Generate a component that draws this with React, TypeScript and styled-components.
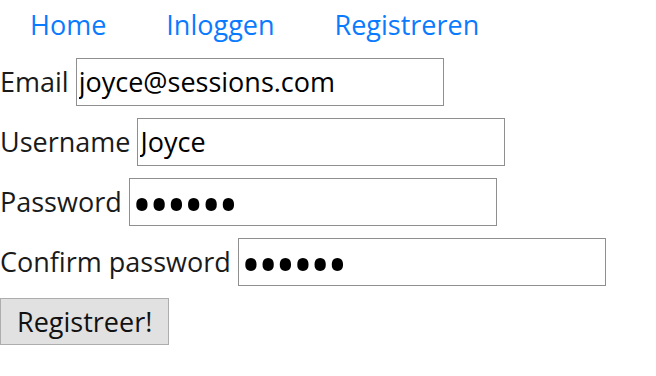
import React from "react";
import styled, { createGlobalStyle } from "styled-components";

const GlobalStyle = createGlobalStyle`
  body {
    margin: 0;
    background: #fff;
    font-family: "Open Sans", "Noto Sans", sans-serif;
    color: #111;
  }
`;

const Nav = styled.nav`
  height: 58px;
  ul {
    list-style: none;
    margin: 0;
    padding: 0 0 0 30px;
    display: flex;
    gap: 60px;
    height: 48px;
    align-items: center;
  }
  a {
    color: #0a7bff;
    text-decoration: none;
    font-size: 27px;
  }
`;

const Form = styled.form`
  display: flex;
  flex-direction: column;
  gap: 13px;
`;

const Row = styled.div`
  display: flex;
  align-items: center;
  gap: 7px;
  height: 47px;
  label {
    font-size: 27px;
    color: #1a1a1a;
  }
`;

const Input = styled.input`
  box-sizing: border-box;
  width: 368px;
  height: 48px;
  border: 1px solid #8f8f8f;
  padding: 0 2px;
  font-family: "Open Sans", "Noto Sans", sans-serif;
  font-size: 27px;
  color: #000;
  outline: none;
  &[type="password"] {
    font-size: 54px;
    letter-spacing: -3px;
    padding: 4px 2px 0;
  }
`;

const Button = styled.button`
  align-self: flex-start;
  box-sizing: border-box;
  height: 47px;
  padding: 0 16px;
  background: #e1e1e1;
  border: 1px solid #adadad;
  border-radius: 0;
  font-family: "Open Sans", "Noto Sans", sans-serif;
  font-size: 27px;
  color: #111;
`;

const App = () => {
  return (
    <>
      <GlobalStyle />
      <Nav>
        <ul>
          <li>
            <a href="#">Home</a>
          </li>
          <li>
            <a href="#">Inloggen</a>
          </li>
          <li>
            <a href="#">Registreren</a>
          </li>
        </ul>
      </Nav>
      <Form onSubmit={(e) => e.preventDefault()}>
        <Row>
          <label htmlFor="email">Email</label>
          <Input id="email" type="text" defaultValue="joyce@sessions.com" />
        </Row>
        <Row>
          <label htmlFor="username">Username</label>
          <Input id="username" type="text" defaultValue="Joyce" />
        </Row>
        <Row>
          <label htmlFor="password">Password</label>
          <Input id="password" type="password" defaultValue="joyce1" />
        </Row>
        <Row>
          <label htmlFor="confirm">Confirm password</label>
          <Input id="confirm" type="password" defaultValue="joyce1" />
        </Row>
        <Button type="submit">Registreer!</Button>
      </Form>
    </>
  );
};

export default App;
